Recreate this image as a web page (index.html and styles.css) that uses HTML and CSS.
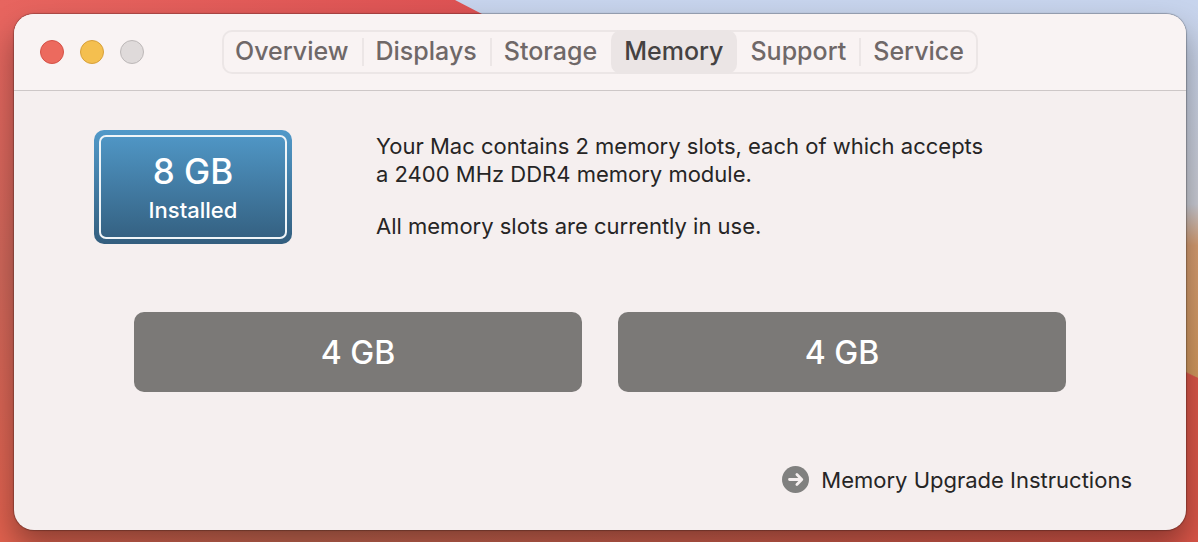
FILE: index.html
```html
<!DOCTYPE html>
<html lang="en">
<head>
  <meta charset="UTF-8">
  <meta name="viewport" content="width=device-width, initial-scale=1.0">
  <title>About This Mac</title>
  <link rel="stylesheet" href="styles.css">
</head>
<body>
  <!-- desktop wallpaper -->
  <svg class="wallpaper" viewBox="0 0 1198 542" preserveAspectRatio="none" aria-hidden="true">
    <defs>
      <linearGradient id="red" x1="0" y1="0" x2="0" y2="1">
        <stop offset="0" stop-color="#e7655f"/>
        <stop offset="0.5" stop-color="#d0675a"/>
        <stop offset="1" stop-color="#e0614e"/>
      </linearGradient>
      <linearGradient id="top-red" x1="0" y1="0" x2="1" y2="0">
        <stop offset="0" stop-color="#e7655f"/>
        <stop offset="1" stop-color="#dc5052"/>
      </linearGradient>
      <linearGradient id="sky" x1="0" y1="0" x2="0" y2="1">
        <stop offset="0" stop-color="#c7d4ed"/>
        <stop offset="0.54" stop-color="#c8cad3"/>
        <stop offset="0.65" stop-color="#d49b70"/>
        <stop offset="1" stop-color="#d0965c"/>
      </linearGradient>
      <linearGradient id="bottom" x1="0" y1="0" x2="1" y2="0">
        <stop offset="0" stop-color="#e0614e"/>
        <stop offset="0.25" stop-color="#c4654f"/>
        <stop offset="1" stop-color="#d95548"/>
      </linearGradient>
    </defs>
    <rect width="1198" height="542" fill="url(#red)"/>
    <rect width="520" height="30" fill="url(#top-red)"/>
    <path d="M455 0L482 14L1198 378V0Z" fill="url(#sky)"/>
    <path d="M0 520H1120V350L1186 373L1198 378V542H0Z" fill="url(#bottom)"/>
  </svg>

  <main class="window">
    <header class="titlebar">
      <div class="lights">
        <button class="light close" type="button" aria-label="Close"></button>
        <button class="light minimize" type="button" aria-label="Minimize"></button>
        <button class="light zoom" type="button" aria-label="Zoom" disabled></button>
      </div>
      <nav class="tabs">
        <button class="tab" type="button">Overview</button>
        <button class="tab" type="button">Displays</button>
        <button class="tab" type="button">Storage</button>
        <button class="tab active" type="button" aria-current="page">Memory</button>
        <button class="tab" type="button">Support</button>
        <button class="tab" type="button">Service</button>
      </nav>
    </header>

    <section class="content">
      <div class="summary">
        <div class="badge">
          <div class="badge-inner">
            <span class="size">8 GB</span>
            <span class="state">Installed</span>
          </div>
        </div>
        <div class="description">
          <p>Your Mac contains 2 memory slots, each of which accepts<br>a 2400 MHz DDR4 memory module.</p>
          <p>All memory slots are currently in use.</p>
        </div>
      </div>

      <div class="slots">
        <div class="slot">4 GB</div>
        <div class="slot">4 GB</div>
      </div>

      <footer class="footer">
        <a class="upgrade" href="#">
          <svg class="arrow" width="28" height="28" viewBox="0 0 28 28" aria-hidden="true">
            <circle cx="13.5" cy="13.5" r="13.5" fill="#80807f"/>
            <path d="M7.5 13.5H19.5M14.9 8.6L19.8 13.5L14.9 18.4" fill="none" stroke="#f5efef" stroke-width="2.8" stroke-linecap="round" stroke-linejoin="round"/>
          </svg>
          Memory Upgrade Instructions
        </a>
      </footer>
    </section>
  </main>
</body>
</html>
```
FILE: styles.css
```css
* {
  box-sizing: border-box;
}
body {
  margin: 0;
  min-height: 100vh;
  padding: 14px 12px 12px 14px;
  display: flex;
  flex-direction: column;
  font-family: Inter, "Liberation Sans", sans-serif;
  font-size: 22px;
  line-height: 28px;
  color: #262525;
  background-color: #d0675a;
}
button {
  font: inherit;
  border: none;
  padding: 0;
}
.wallpaper {
  position: absolute;
  left: 0;
  top: 0;
  width: 100%;
  height: 100%;
  z-index: -1;
}
.window {
  flex: 1;
  display: flex;
  flex-direction: column;
  border-radius: 20px;
  background-color: #f5efef;
  box-shadow: 0 0 1px 1px rgba(0,0,0,0.25), 0 16px 30px rgba(0,0,0,0.35);
  overflow: hidden;
}
.titlebar {
  display: grid;
  grid-template-columns: 1fr auto 1fr;
  align-items: center;
  padding: 16px 26px;
  border-bottom: 1px solid #cdc7c7;
  background-color: #f9f3f3;
}
.lights {
  display: flex;
  gap: 16px;
}
.light {
  width: 24px;
  height: 24px;
  border-radius: 50%;
  border: 1px solid;
}
.close {
  background-color: #ec6a5e;
  border-color: #d55146;
}
.minimize {
  background-color: #f4bf4f;
  border-color: #d8a03a;
}
.zoom {
  background-color: #dfdada;
  border-color: #bdb8b8;
}
.tabs {
  display: flex;
  height: 44px;
  border-radius: 10px;
  box-shadow: inset 0 0 0 2px #ece6e6;
}
.tab {
  position: relative;
  padding: 0 14px 2px 13px;
  font-size: 25px;
  font-weight: 500;
  color: #6f6868;
  background: none;
}
.tab.active {
  border-radius: 10px;
  background-color: #ebe5e5;
  color: #454242;
}
/* thin divider between two unselected tabs */
.tab:not(.active) + .tab:not(.active)::before {
  content: "";
  position: absolute;
  left: -1px;
  top: 8px;
  width: 2px;
  height: 28px;
  background-color: #ece6e6;
}
.content {
  flex: 1;
  display: flex;
  flex-direction: column;
  padding: 39px 54px 36px 80px;
}
.summary {
  display: flex;
  gap: 84px;
}
.badge {
  width: 198px;
  height: 114px;
  padding: 5px;
  border-radius: 10px;
  background: linear-gradient(#5199c9, #335e7e);
  color: #fff;
}
.badge-inner {
  height: 100%;
  padding-top: 2px;
  display: flex;
  flex-direction: column;
  align-items: center;
  justify-content: center;
  border: 2px solid #f0f5f8;
  border-radius: 7px;
}
.size {
  font-size: 35px;
  line-height: 44px;
  font-weight: 500;
}
.state {
  font-weight: 500;
  line-height: 34px;
}
.description {
  padding-top: 2px;
}
.description p {
  margin: 0 0 24px;
}
.description p:last-child {
  margin-bottom: 0;
}
.slots {
  display: flex;
  gap: 36px;
  margin: 68px 66px 0 40px;
}
.slot {
  flex: 1;
  height: 80px;
  padding-top: 2px;
  border-radius: 10px;
  background-color: #7b7977;
  color: #fff;
  font-size: 32px;
  font-weight: 500;
  line-height: 78px;
  text-align: center;
}
.footer {
  display: flex;
  justify-content: flex-end;
  margin-top: auto;
}
.upgrade {
  display: flex;
  align-items: center;
  gap: 11px;
  color: inherit;
  text-decoration: none;
}
```
